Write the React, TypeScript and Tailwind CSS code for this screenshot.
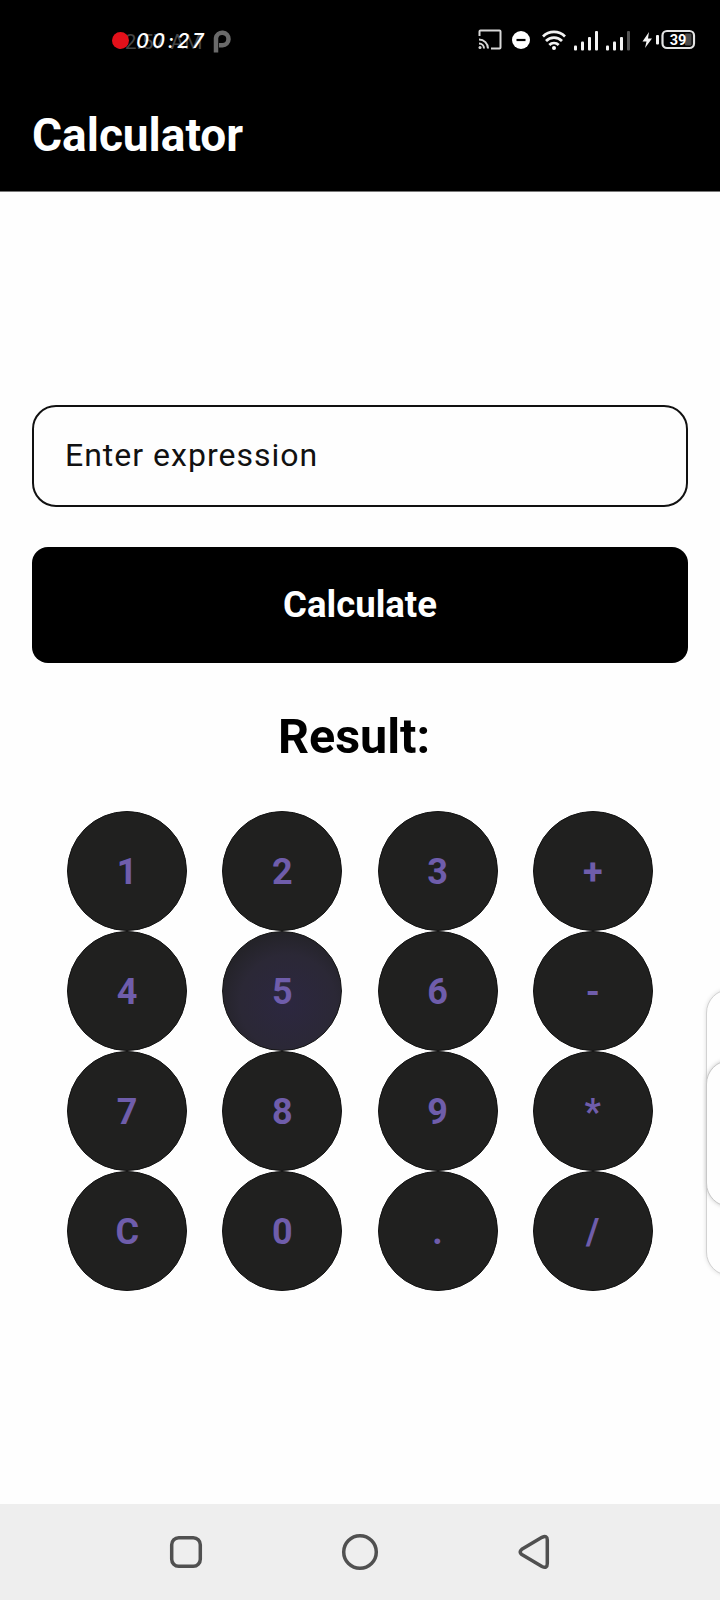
import React from "react";

const keys = ["1", "2", "3", "+", "4", "5", "6", "-", "7", "8", "9", "*", "C", "0", ".", "/"];

function StatusBar() {
  return (
    <div className="flex h-20 items-center justify-between pl-[112px] pr-[24px]">
      <div className="relative flex h-7 items-center pt-px">
        <span className="absolute left-px top-0.5 text-[21px] leading-7 text-[#444]">12:57 AM</span>
        <span className="relative size-[17px] rounded-full bg-[#e3101a]" />
        <span className="relative ml-[7px] w-[72px] font-['Inter',sans-serif] text-[20px] font-medium italic leading-7 tracking-[3px] text-white">00:27</span>
        <svg className="ml-[5px]" width="18" height="24" viewBox="0 0 18 24" fill="none" stroke="#6a6a6a" strokeWidth="4.5">
          <path d="M3 23.500V9a6.300 6.300 0 1 1 6.500 7.300H6" />
        </svg>
      </div>
      <svg width="218" height="24" viewBox="478 28 218 24" fill="none">
        <g stroke="#d8d8d8" strokeWidth="2">
          <path d="M479.500 36V31.500q0-1 1-1h19q1 0 1 1v16q0 1-1 1H491" />
          <path d="M479 39.500a9 9 0 0 1 9 9M479 43.500a5 5 0 0 1 5 5" />
        </g>
        <circle cx="480" cy="47.500" r="1.500" fill="#d8d8d8" />
        <circle cx="521" cy="40" r="9" fill="#fff" />
        <path d="M516.500 40h9" stroke="#000" strokeWidth="2.200" />
        <g stroke="#f2f2f2" strokeWidth="2.700">
          <path d="M543 36.500a15.500 15.500 0 0 1 22 0M546 41a11 11 0 0 1 16 0M549.300 45a6.500 6.500 0 0 1 9.400 0" />
        </g>
        <circle cx="554" cy="48" r="2" fill="#fff" />
        <g fill="#f4f4f4">
          <rect x="574" y="45.500" width="3" height="5" rx="1" />
          <rect x="581" y="41.500" width="3" height="9" rx="1" />
          <rect x="588" y="37" width="3" height="13.500" rx="1" />
          <rect x="595" y="31" width="3" height="19.500" rx="1" />
          <rect x="606" y="45.500" width="3" height="5" rx="1" />
          <rect x="613" y="41.500" width="3" height="9" rx="1" />
          <rect x="620" y="37" width="3" height="13.500" rx="1" />
          <rect x="627" y="31" width="3" height="19.500" rx="1" fill="#555" />
          <path d="M649 32l-6.500 9.500h4l-1.500 6.500 7-9.500h-4z" />
          <rect x="656" y="35" width="3" height="9.500" rx="1" />
        </g>
        <rect x="662.500" y="31" width="31.500" height="17" rx="4.500" stroke="#e4e4e4" strokeWidth="2.200" />
        <rect x="685" y="33.500" width="6.500" height="12" rx="1" fill="#4a4a4a" />
        <text x="678" y="45" fill="#fff" textAnchor="middle" fontFamily="Roboto, sans-serif" fontWeight="700" fontSize="14.5">39</text>
      </svg>
    </div>
  );
}

export default function App() {
  return (
    <div className="relative flex h-[1600px] w-[720px] flex-col overflow-hidden bg-[#fefefe] font-['Roboto',sans-serif]">
      <header className="h-[192px] shrink-0 border-b border-[#777] bg-black text-white">
        <StatusBar />
        <h1 className="px-8 pt-[29px] text-[46px] font-bold leading-[52px]">Calculator</h1>
      </header>

      <main className="flex grow flex-col px-8 pt-[213px]">
        <input
          className="h-[102px] shrink-0 rounded-[24px] border-2 border-[#111] bg-transparent px-[31px] pb-[3px] text-[32px] tracking-[1px] text-black placeholder:text-[#111] placeholder:opacity-100"
          placeholder="Enter expression"
        />
        <button className="mt-10 h-[116px] shrink-0 rounded-2xl bg-black text-[36.5px] font-bold text-white">Calculate</button>
        <h2 className="mt-[46px] pr-[12px] text-center text-[48.5px] font-bold leading-[56px] text-black">Result:</h2>
        <div className="mt-[46px] grid grid-cols-[repeat(4,120px)] justify-evenly">
          {keys.map((k) => (
            <button
              key={k}
              className={
                k === "5"
                  ? "size-[120px] rounded-full border border-[#151515] bg-[radial-gradient(circle_at_55%_60%,#2c2740_0%,#2b2836_50%,#242329_72%)] pt-[2px] text-[36px] font-bold text-[#6f5dab]"
                  : "size-[120px] rounded-full border border-[#111] bg-[#20201f] pt-[2px] text-[36px] font-bold text-[#6f5dab]"
              }
            >
              {k}
            </button>
          ))}
        </div>
      </main>

      <div className="absolute left-[706px] top-[989px] h-[287px] w-12 rounded-[24px] border border-[#d2d2d2] bg-[#fefefe] shadow-[0_0_4px_#ddd]" />
      <div className="absolute left-[706px] top-[1060px] h-[147px] w-12 rounded-[26px] border border-[#c8c8c8] bg-[#fefefe] shadow-[0_0_4px_#ccc]" />

      <nav className="flex h-24 shrink-0 items-center bg-[#eeeeee] px-[168px]">
        <svg width="384" height="40" viewBox="168 1532 384 40" fill="none" stroke="#505050" strokeWidth="3.500" strokeLinejoin="round">
          <rect x="171.700" y="1537.700" width="28.600" height="28.600" rx="7" />
          <circle cx="360" cy="1552" r="16.300" />
          <path d="M521.800 1549.300L542 1537.300Q547.300 1534.800 547.300 1540V1563.500Q547.300 1569 542 1566.500L521.800 1554.500Q518.500 1552 521.800 1549.300Z" />
        </svg>
      </nav>
    </div>
  );
}
